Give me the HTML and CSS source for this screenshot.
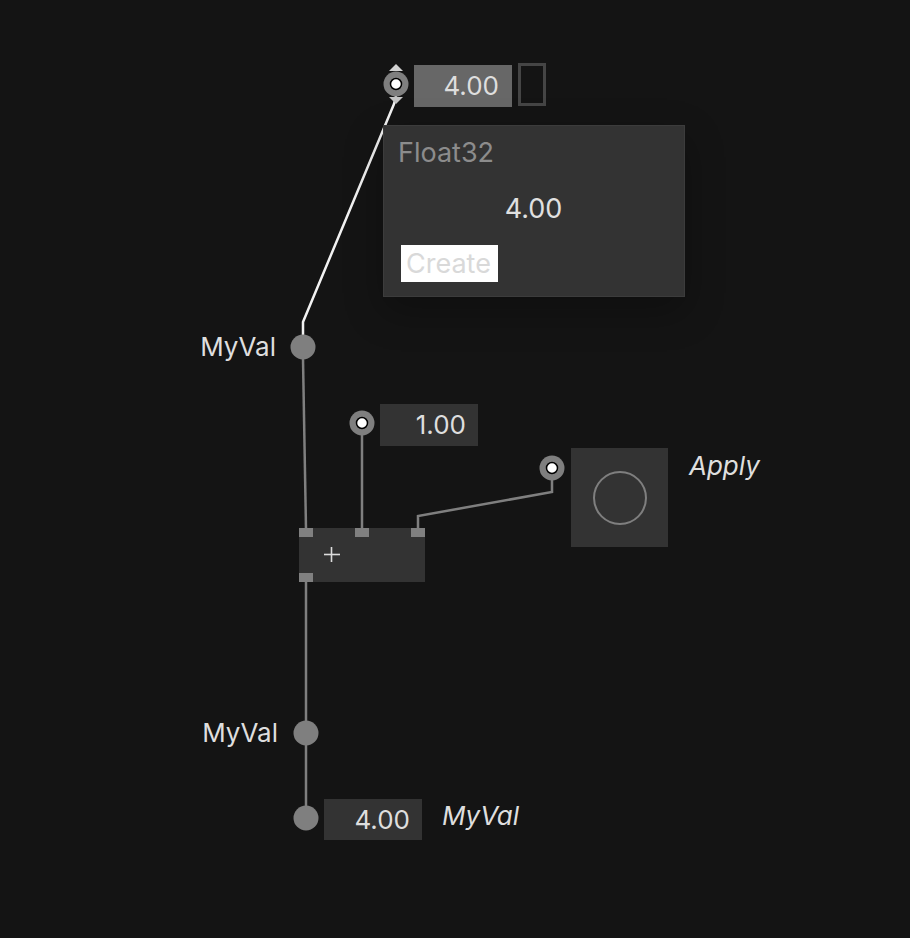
FILE: index.html
```html
<!DOCTYPE html>
<html>
<head>
<meta charset="utf-8">
<link rel="stylesheet" href="styles.css">
</head>
<body>
<div class="canvas">
  <svg class="wires" width="910" height="938" viewBox="0 0 910 938">
    <polyline class="wire-hot" points="396,96 394,104 303,322 303,336"/>
    <line class="wire" x1="303" y1="359" x2="306" y2="529"/>
    <line class="wire" x1="362" y1="435" x2="362" y2="529"/>
    <polyline class="wire" points="418,529 418,516 552,492 552,480"/>
    <line class="wire" x1="306" y1="582" x2="306" y2="818"/>

    <polygon class="arrow-up" points="389,71 403,71 396,64"/>
    <polygon class="arrow-down" points="389,97 403,97 396,104"/>
    <circle class="pin" cx="396" cy="84" r="12.5"/>
    <circle class="pin-dot" cx="396" cy="84" r="5.5"/>

    <circle class="pin" cx="303" cy="347" r="12.5"/>

    <circle class="pin" cx="362" cy="423" r="12.5"/>
    <circle class="pin-dot" cx="362" cy="423" r="5.5"/>

    <circle class="pin" cx="552" cy="468" r="12.5"/>
    <circle class="pin-dot" cx="552" cy="468" r="5.5"/>

    <circle class="pin" cx="306" cy="733" r="12.5"/>
    <circle class="pin" cx="306" cy="818" r="12.5"/>
  </svg>

  <div class="iobox iobox-active top-val">4.00</div>
  <div class="toggle-frame"></div>

  <div class="popup">
    <div class="popup-type">Float32</div>
    <div class="popup-value">4.00</div>
    <div class="popup-actions"><span class="btn-create">Create</span></div>
  </div>

  <div class="label label-right myval-1">MyVal</div>

  <div class="iobox one-val">1.00</div>

  <div class="node plus-node">
    <span class="node-pin pin-in1"></span>
    <span class="node-pin pin-in2"></span>
    <span class="node-pin pin-in3"></span>
    <span class="node-pin pin-out"></span>
    <svg class="plus-sign" width="18" height="18" viewBox="0 0 18 18">
      <line x1="1" y1="8.5" x2="17" y2="8.5"/>
      <line x1="8.5" y1="1" x2="8.5" y2="16"/>
    </svg>
  </div>

  <div class="bang">
    <span class="bang-ring"></span>
  </div>
  <div class="label label-italic apply-label">Apply</div>

  <div class="label label-right myval-2">MyVal</div>

  <div class="iobox bottom-val">4.00</div>
  <div class="label label-italic myval-3">MyVal</div>
</div>
</body>
</html>
```

FILE: styles.css
```css
html, body {
  margin: 0;
  padding: 0;
  background: #141414;
}

.canvas {
  position: relative;
  width: 910px;
  height: 938px;
  overflow: hidden;
  background: #141414;
  font-family: Inter, "Noto Sans", "Open Sans", sans-serif;
  font-size: 26px;
  color: #dedede;
}

.wires {
  position: absolute;
  left: 0;
  top: 0;
}

.wire {
  stroke: #7f7f7f;
  stroke-width: 2.5;
  fill: none;
}

.wire-hot {
  stroke: #f2f2f2;
  stroke-width: 2.5;
  fill: none;
  stroke-linejoin: round;
}

.pin {
  fill: #7f7f7f;
}

.pin-dot {
  fill: #ffffff;
  stroke: #000000;
  stroke-width: 1.5;
}

.arrow-up {
  fill: #d2d2d2;
}

.arrow-down {
  fill: #c4c4c4;
}

.iobox {
  position: absolute;
  box-sizing: border-box;
  display: flex;
  align-items: center;
  justify-content: flex-end;
  width: 98px;
  height: 42px;
  padding-right: 12px;
  background: #333333;
  line-height: 1;
}

.iobox-active {
  background: #676767;
}

.top-val {
  left: 414px;
  top: 65px;
  padding-right: 13px;
}

.one-val {
  left: 380px;
  top: 404px;
}

.bottom-val {
  left: 324px;
  top: 799px;
  height: 41px;
}

.toggle-frame {
  position: absolute;
  left: 518px;
  top: 63px;
  width: 28px;
  height: 43px;
  box-sizing: border-box;
  border: 3px solid #454545;
}

.popup {
  position: absolute;
  left: 383px;
  top: 125px;
  width: 302px;
  height: 172px;
  box-sizing: border-box;
  padding: 11px 15px 0 14px;
  background: #333333;
  border: 1px solid #3c3c3c;
  box-shadow: 0 14px 36px rgba(0, 0, 0, 0.28);
  display: flex;
  flex-direction: column;
}

.popup-type {
  color: #8c8c8c;
  font-size: 27px;
  line-height: 32px;
}

.popup-value {
  margin-top: 24px;
  text-align: center;
  font-size: 27px;
  line-height: 32px;
  color: #e0e0e0;
}

.popup-actions {
  margin-top: 20px;
  display: flex;
}

.btn-create {
  margin-left: 3px;
  width: 97px;
  height: 37px;
  box-sizing: border-box;
  padding-left: 5px;
  background: #ffffff;
  color: #d9d9d9;
  font-size: 27px;
  line-height: 37px;
}

.label {
  position: absolute;
  height: 32px;
  line-height: 32px;
  white-space: nowrap;
  color: #dedede;
}

.label-right {
  text-align: right;
  width: 100px;
}

.label-italic {
  font-style: italic;
}

.myval-1 {
  left: 176px;
  top: 331px;
}

.myval-2 {
  left: 178px;
  top: 717px;
}

.apply-label {
  left: 689px;
  top: 450px;
}

.myval-3 {
  left: 442px;
  top: 800px;
}

.node {
  position: absolute;
  background: #333333;
}

.plus-node {
  left: 299px;
  top: 528px;
  width: 126px;
  height: 54px;
}

.node-pin {
  position: absolute;
  width: 14px;
  height: 9px;
  background: #808080;
}

.pin-in1 { left: 0; top: 0; }
.pin-in2 { left: 56px; top: 0; }
.pin-in3 { left: 112px; top: 0; }
.pin-out { left: 0; bottom: 0; }

.plus-sign {
  position: absolute;
  left: 24px;
  top: 18px;
}

.plus-sign line {
  stroke: #dcdcdc;
  stroke-width: 1.6;
}

.bang {
  position: absolute;
  left: 571px;
  top: 448px;
  width: 97px;
  height: 99px;
  background: #333333;
  display: flex;
  align-items: center;
  justify-content: center;
}

.bang-ring {
  width: 54px;
  height: 54px;
  box-sizing: border-box;
  border: 2.5px solid #7f7f7f;
  border-radius: 50%;
}
```
